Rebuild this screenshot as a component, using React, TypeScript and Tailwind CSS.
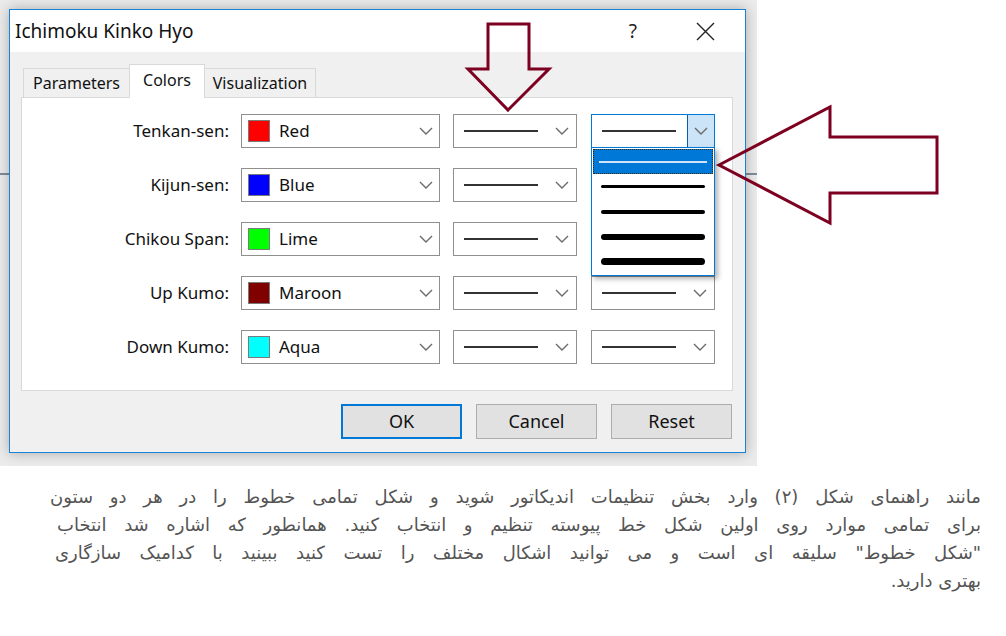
import React from "react";

interface Row {
  label: string;
  name: string;
  swatch: string;
}

const ROWS: Row[] = [
  { label: "Tenkan-sen:", name: "Red", swatch: "bg-[#ff0000]" },
  { label: "Kijun-sen:", name: "Blue", swatch: "bg-[#0000ff]" },
  { label: "Chikou Span:", name: "Lime", swatch: "bg-[#00ff00]" },
  { label: "Up Kumo:", name: "Maroon", swatch: "bg-[#800000]" },
  { label: "Down Kumo:", name: "Aqua", swatch: "bg-[#00ffff]" },
];

// line widths shown in the open style list (first one is selected)
const WIDTHS = ["h-[3px]", "h-[4px]", "h-[6px]", "h-[7px]"];

const Chevron = ({ className = "" }: { className?: string }) => (
  <svg width="14" height="8" viewBox="0 0 14 8" className={className}>
    <polyline points="1,1 7,7 13,1" fill="none" stroke="#6a6a6a" strokeWidth="1.4" />
  </svg>
);

const StyleList = () => (
  <div className="absolute left-[-1px] top-full z-20 flex h-[129px] w-[124px] flex-col border border-[#0078d7] bg-white p-[1px] shadow-[3px_3px_5px_rgba(0,0,0,0.3)]">
    <div className="flex h-[25px] items-center border border-dotted border-[#3a2a10] bg-[#0078d7]">
      <span className="mx-[5px] h-[2px] flex-1 bg-[#cfe4f8]" />
    </div>
    {WIDTHS.map((h) => (
      <div key={h} className="flex h-[25px] items-center">
        <span className={`mx-[8px] flex-1 rounded-full bg-black ${h}`} />
      </div>
    ))}
  </div>
);

const LineCombo = ({ focused = false }: { focused?: boolean }) => (
  <div
    className={`relative flex h-[34px] w-[124px] items-center border bg-white ${
      focused ? "border-[#0078d7]" : "border-[#8f8f8f]"
    }`}
  >
    <span className="ml-[10px] h-[2px] w-[74px] bg-[#333333]" />
    {focused ? (
      <div className="ml-auto flex h-full w-[27px] items-center justify-center border-l border-[#0c5da5] bg-[#cce4f7]">
        <Chevron />
      </div>
    ) : (
      <Chevron className="ml-auto mr-[7px]" />
    )}
    {focused && <StyleList />}
  </div>
);

const Btn = ({ label, primary = false }: { label: string; primary?: boolean }) => (
  <button
    className={`flex h-[35px] w-[121px] items-center justify-center bg-[#e1e1e1] text-[18px] text-[#111] ${
      primary ? "border-2 border-[#0078d7]" : "border border-[#adadad]"
    }`}
  >
    {label}
  </button>
);

export default function App() {
  return (
    <div className="relative h-[636px] w-[1006px] overflow-hidden bg-white font-['Noto_Sans',sans-serif]">
      {/* ── screenshot of the MT4 dialog ── */}
      <div className="relative h-[466px] w-[757px] bg-[#ebebeb] pl-[9px] pt-[9px]">
        {/* chart line peeking out behind the window */}
        <span className="absolute left-0 top-[173px] h-[2px] w-[9px] bg-[#7f8c9b]" />
        <span className="absolute right-0 top-[173px] h-[2px] w-[12px] bg-[#7f8c9b]" />

        <div className="relative flex h-[444px] w-[737px] flex-col border border-[#1883d7] bg-[#f0f0f0] shadow-[0_0_12px_rgba(0,0,0,0.28)]">
          {/* title bar */}
          <div className="flex h-[42px] items-center bg-white pl-[5px]">
            <span className="text-[19px] text-[#111]">Ichimoku Kinko Hyo</span>
            <span className="ml-auto text-[19px] text-[#222]">?</span>
            <svg width="19" height="19" viewBox="0 0 19 19" className="ml-[59px] mr-[30px]">
              <path d="M1 1 L18 18 M18 1 L1 18" stroke="#222" strokeWidth="1.4" />
            </svg>
          </div>

          {/* tabs */}
          <div className="ml-[11px] mr-[12px] mt-[12px]">
            <div className="flex h-[33px] items-end pl-[2px] text-[16px] text-[#111]">
              <div className="flex h-[29px] w-[107px] items-center justify-center border border-b-0 border-[#d9d9d9] bg-[#f0f0f0]">
                Parameters
              </div>
              <div className="relative z-10 -mb-px -ml-px flex h-[34px] w-[76px] items-start justify-center border border-b-0 border-[#d9d9d9] bg-white pt-[3px]">
                Colors
              </div>
              <div className="-ml-px flex h-[29px] w-[112px] items-center justify-center border border-b-0 border-[#d9d9d9] bg-[#f0f0f0]">
                Visualization
              </div>
            </div>

            {/* panel */}
            <div className="flex h-[294px] flex-col gap-[20px] border border-[#d9d9d9] bg-white pt-[16px]">
              {ROWS.map((r, i) => (
                <div key={r.label} className="flex items-center">
                  <span className="w-[207px] text-right text-[17px] text-[#111]">{r.label}</span>
                  <div className="ml-[12px] flex h-[34px] w-[199px] items-center border border-[#8f8f8f] bg-white pl-[6px]">
                    <span className={`h-[22px] w-[22px] border border-[#7a7a7a] ${r.swatch}`} />
                    <span className="ml-[9px] text-[17px] text-[#111]">{r.name}</span>
                    <Chevron className="ml-auto mr-[6px]" />
                  </div>
                  <div className="ml-[13px]">
                    <LineCombo />
                  </div>
                  <div className="ml-[14px]">
                    <LineCombo focused={i === 0} />
                  </div>
                </div>
              ))}
            </div>
          </div>

          {/* buttons */}
          <div className="mr-[12px] mt-[13px] flex justify-end gap-[14px] pr-px">
            <Btn label="OK" primary />
            <Btn label="Cancel" />
            <Btn label="Reset" />
          </div>
        </div>
      </div>

      {/* ── caption ── */}
      <div
        dir="rtl"
        className="ml-[50px] mt-[17px] w-[931px] font-['DejaVu_Sans',sans-serif] text-[18px] leading-[28px] text-[#555]"
      >
        <div className="text-justify [text-align-last:justify]">
          مانند راهنمای شکل (۲) وارد بخش تنظیمات اندیکاتور شوید و شکل تمامی خطوط را در هر دو ستون
        </div>
        <div className="ml-[7px] text-justify [text-align-last:justify]">
          برای تمامی موارد روی اولین شکل خط پیوسته تنظیم و انتخاب کنید. همانطور که اشاره شد انتخاب
        </div>
        <div className="ml-[5px] text-justify [text-align-last:justify]">
          "شکل خطوط" سلیقه ای است و می توانید اشکال مختلف را تست کنید ببینید با کدامیک سازگاری
        </div>
        <div>بهتری دارید.</div>
      </div>

      {/* ── annotation arrows ── */}
      <svg width="1006" height="636" className="pointer-events-none absolute left-0 top-0">
        <polygon
          points="488,24 529,24 529,69 549,69 508,110 468,69 488,69"
          fill="none"
          stroke="#7d0020"
          strokeWidth="3"
        />
        <polygon
          points="719,165 830,107 830,137 937,137 937,193 830,193 830,223"
          fill="none"
          stroke="#7d0020"
          strokeWidth="3"
        />
      </svg>
    </div>
  );
}
